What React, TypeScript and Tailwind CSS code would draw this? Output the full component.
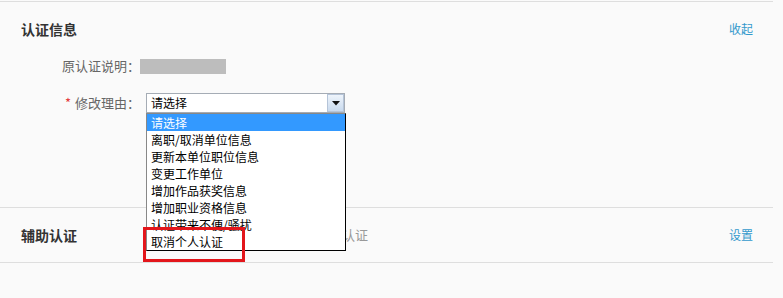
import React from 'react'

const options = [
  '请选择',
  '离职/取消单位信息',
  '更新本单位职位信息',
  '变更工作单位',
  '增加作品获奖信息',
  '增加职业资格信息',
  '认证带来不便/骚扰',
  '取消个人认证',
]

const font = { fontFamily: '"Noto Sans CJK SC", "Noto Sans", sans-serif' }

const App = () => {
  return (
    <div className="relative w-[783px] h-[298px] bg-[#fafafa] pt-px" style={font}>
      <div className="w-[773px] border-t border-[#dedede]">
        {/* 认证信息 */}
        <div className="h-[206px] border-b border-[#dedede] pt-[17px]">
          <div className="flex items-center justify-between h-[20px] pl-[21px] pr-[20px]">
            <span className="text-[14px] leading-[20px] font-bold text-[#333]">认证信息</span>
            <a className="text-[12px] leading-[20px] text-[#3399cc] cursor-pointer">收起</a>
          </div>

          <div className="flex items-center h-[20px] mt-[17px]">
            <span className="w-[140px] text-right text-[13px] leading-[20px] text-[#666]">原认证说明：</span>
            <span className="w-[86px] h-[15px] bg-[#bdbdbd]" />
          </div>

          <div className="flex items-center h-[20px] mt-[17px]">
            <span className="w-[140px] text-right text-[13px] leading-[20px] text-[#666]">
              <span className="text-[#e4393c] mr-[4px]">*</span>修改理由：
            </span>
            <div className="ml-[6px] w-[199px] h-[20px] bg-white border border-[#a5acb5] flex items-center justify-between">
              <span className="pl-[4px] text-[12px] leading-[18px] text-black">请选择</span>
              <span className="w-[17px] h-[18px] border border-[#b5c4d8] bg-gradient-to-b from-[#eef4fb] to-[#c9daee] flex items-center justify-center">
                <svg width="8" height="5" viewBox="0 0 8 5">
                  <path d="M0 0h8L4 4.5z" fill="#111" />
                </svg>
              </span>
            </div>
          </div>
        </div>

        {/* 辅助认证 */}
        <div className="h-[55px] border-b border-[#dedede] flex items-center pl-[21px] pr-[20px]">
          <span className="w-[125px] text-[14px] leading-[20px] font-bold text-[#333]">辅助认证</span>
          <span className="ml-[131px] text-[13px] leading-[20px] text-[#999]">已开通辅助认证</span>
          <a className="ml-auto text-[12px] leading-[20px] text-[#3399cc] cursor-pointer">设置</a>
        </div>
      </div>

      {/* 下拉列表 */}
      <ul className="absolute left-[146px] top-[113px] w-[200px] bg-white border border-black border-l-[#888] border-t-[#888]">
        {options.map((o, i) => (
          <li
            key={o}
            className={
              i === 0
                ? 'h-[17px] pl-[4px] text-[12px] leading-[17px] bg-[#3399ff] text-white'
                : 'h-[17px] pl-[4px] text-[12px] leading-[17px] text-black'
            }
          >
            {o}
          </li>
        ))}
      </ul>

      {/* 标注框 */}
      <div className="absolute left-[143px] top-[227px] w-[102px] h-[35px] border-[3px] border-[#e3161b]" />
    </div>
  )
}

export default App
